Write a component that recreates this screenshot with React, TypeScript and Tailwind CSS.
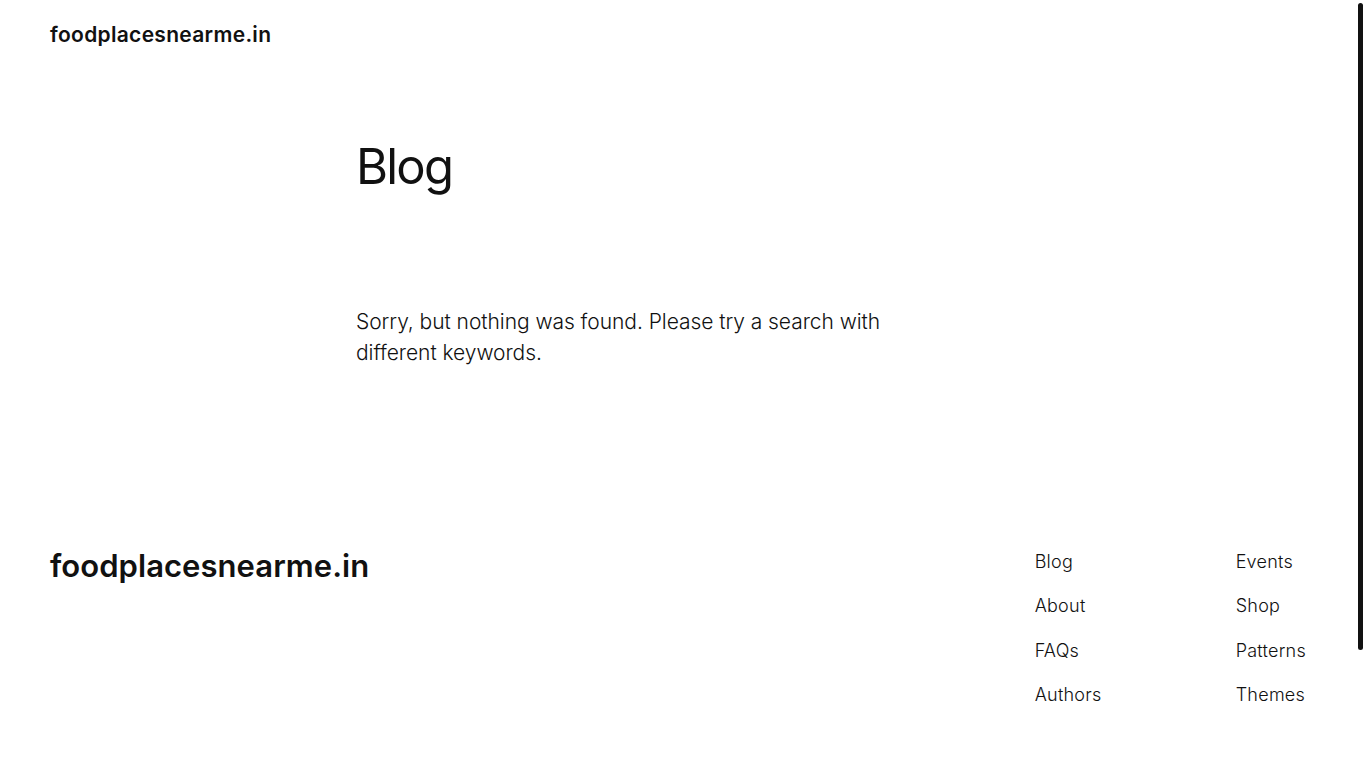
const footerLinks = [
  ['Blog', 'About', 'FAQs', 'Authors'],
  ['Events', 'Shop', 'Patterns', 'Themes'],
];

export default function App() {
  return (
    <div className="relative h-[768px] overflow-hidden bg-white text-[#111111] font-['Inter',sans-serif]">
      {/* Header */}
      <header className="flex items-center h-[70px] px-[50px]">
        <a className="text-[21px] font-semibold tracking-[0.3px]">foodplacesnearme.in</a>
      </header>

      {/* Main */}
      <main className="pl-[356px] pt-[68px]">
        <h1 className="text-[49px] font-normal leading-[1.2] tracking-[-1.8px]">Blog</h1>
        <p className="mt-[109px] max-w-[580px] text-[21px] font-light leading-[31px] tracking-[-0.05px]">
          Sorry, but nothing was found. Please try a search with different keywords.
        </p>
      </main>

      {/* Footer */}
      <footer className="flex justify-between pl-[50px] pr-[60px] pt-[180px]">
        <div className="text-[31px] font-semibold leading-none tracking-[0.05px] pt-[2px]">foodplacesnearme.in</div>
        <div className="flex pt-[2px]">
          {footerLinks.map((col, i) => (
            <ul key={i} className={i === 0 ? 'w-[201px] flex flex-col gap-[20px]' : 'flex flex-col gap-[20px]'}>
              {col.map((l) => (
                <li key={l} className="text-[18px] font-light leading-[24.5px] tracking-[0.25px]">{l}</li>
              ))}
            </ul>
          ))}
        </div>
      </footer>

      {/* Overlay scrollbar thumb */}
      <div className="absolute right-[3px] top-[3px] h-[647px] w-[5px] rounded-full bg-[#111111]" />
    </div>
  );
}
